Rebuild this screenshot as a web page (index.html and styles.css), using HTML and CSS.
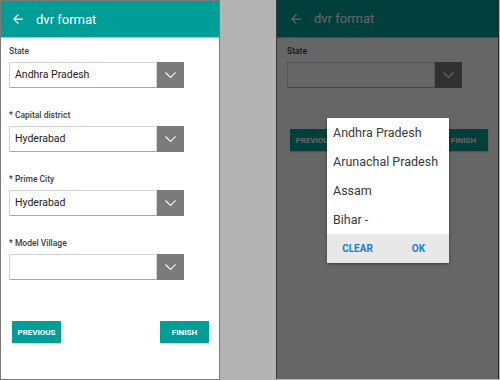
FILE: index.html
```html
<!DOCTYPE html>
<html lang="en">

<head>
    <meta charset="UTF-8">
    <meta name="viewport" content="width=device-width, initial-scale=1.0">
    <title>dvr format</title>
    <link rel="stylesheet" href="styles.css">
</head>

<body>

    <!-- Tela 1: formulario -->
    <div class="phone phone-left">
        <div class="toolbar">
            <svg class="back" width="10" height="10" viewBox="0 0 16 16">
                <path d="M16 7H3.8l5.6-5.6L8 0 0 8l8 8 1.4-1.4L3.8 9H16z" fill="#fff" />
            </svg>
            <span class="title">dvr format</span>
        </div>
        <div class="form">
            <div class="field">
                <label>State</label>
                <div class="select">
                    <span class="value">Andhra Pradesh</span>
                    <span class="arrow"><svg width="11" height="6" viewBox="0 0 11 6"><polyline points="0.5,0.5 5.5,5.5 10.5,0.5" fill="none" stroke="#fff" stroke-width="1.1" /></svg></span>
                </div>
            </div>
            <div class="field">
                <label>* Capital district</label>
                <div class="select">
                    <span class="value">Hyderabad</span>
                    <span class="arrow"><svg width="11" height="6" viewBox="0 0 11 6"><polyline points="0.5,0.5 5.5,5.5 10.5,0.5" fill="none" stroke="#fff" stroke-width="1.1" /></svg></span>
                </div>
            </div>
            <div class="field">
                <label>* Prime City</label>
                <div class="select">
                    <span class="value">Hyderabad</span>
                    <span class="arrow"><svg width="11" height="6" viewBox="0 0 11 6"><polyline points="0.5,0.5 5.5,5.5 10.5,0.5" fill="none" stroke="#fff" stroke-width="1.1" /></svg></span>
                </div>
            </div>
            <div class="field">
                <label>* Model Village</label>
                <div class="select">
                    <span class="value"></span>
                    <span class="arrow"><svg width="11" height="6" viewBox="0 0 11 6"><polyline points="0.5,0.5 5.5,5.5 10.5,0.5" fill="none" stroke="#fff" stroke-width="1.1" /></svg></span>
                </div>
            </div>
            <div class="actions">
                <button class="btn">PREVIOUS</button>
                <button class="btn">FINISH</button>
            </div>
        </div>
    </div>

    <div class="spacer"></div>

    <!-- Tela 2: dialogo de selecao aberto -->
    <div class="phone phone-right">
        <div class="toolbar">
            <svg class="back" width="10" height="10" viewBox="0 0 16 16">
                <path d="M16 7H3.8l5.6-5.6L8 0 0 8l8 8 1.4-1.4L3.8 9H16z" fill="#fff" />
            </svg>
            <span class="title">dvr format</span>
        </div>
        <div class="form">
            <div class="field">
                <label>State</label>
                <div class="select">
                    <span class="value"></span>
                    <span class="arrow"><svg width="11" height="6" viewBox="0 0 11 6"><polyline points="0.5,0.5 5.5,5.5 10.5,0.5" fill="none" stroke="#fff" stroke-width="1.1" /></svg></span>
                </div>
            </div>
            <div class="actions">
                <button class="btn">PREVIOUS</button>
                <button class="btn">FINISH</button>
            </div>
        </div>
        <div class="overlay"></div>
        <div class="dialog">
            <ul class="options">
                <li>Andhra Pradesh</li>
                <li>Arunachal Pradesh</li>
                <li>Assam</li>
                <li>Bihar -</li>
            </ul>
            <div class="dialog-actions">
                <span>CLEAR</span>
                <span>OK</span>
            </div>
        </div>
    </div>

</body>

</html>
```
FILE: styles.css
```css
body {
    margin: 0;
    padding: 0;
    height: 380px;
    display: flex;
    align-items: flex-start;
    background-color: #b3b3b3;
    font-family: Roboto, "Liberation Sans", sans-serif;
    overflow: hidden;
}

.phone {
    position: relative;
    height: 378px;
    background-color: #fff;
    overflow: hidden;
}

.phone-left {
    width: 218px;
    border: 1px solid #7a7a7a;
}

.phone-right {
    width: 221px;
    height: 379px;
    border-left: 1px solid #3a3a3a;
    border-right: 1px solid #2a2a2a;
}

.spacer {
    width: 56px;
}

.toolbar {
    height: 36px;
    display: flex;
    align-items: center;
    padding-left: 12px;
    background-color: #009e97;
    box-shadow: 0 1px 1px rgba(0, 0, 0, 0.25);
}

.phone-right .toolbar {
    height: 37px;
    padding-left: 14px;
}

.back {
    margin-right: 13px;
}

.title {
    color: #fff;
    font-size: 13px;
}

.form {
    padding: 8px 8px 0 8px;
}

.phone-right .form {
    padding-left: 10px;
}

.field {
    margin-bottom: 21px;
}

.field label {
    display: block;
    height: 12px;
    margin-bottom: 5px;
    font-size: 8.5px;
    line-height: 12px;
    font-weight: 500;
    color: #3c3c3c;
}

.select {
    display: flex;
    width: 175px;
    height: 26px;
}

.value {
    flex: 1;
    box-sizing: border-box;
    padding-left: 5px;
    border: 1px solid #d4d4d4;
    border-bottom-color: #a8a8a8;
    font-size: 10.5px;
    line-height: 24px;
    color: #222;
}

.arrow {
    width: 27px;
    display: flex;
    align-items: center;
    justify-content: center;
    background-color: #7b7b7b;
}

.actions {
    display: flex;
    justify-content: space-between;
    padding: 0 2px 0 3px;
    margin-top: 41px;
}

.btn {
    width: 49px;
    height: 22px;
    padding: 0;
    border: none;
    border-radius: 1px;
    background-color: #009e97;
    color: #fff;
    font-family: Roboto, "Liberation Sans", sans-serif;
    font-size: 8px;
    font-weight: bold;
    box-shadow: 0 1px 1px rgba(0, 0, 0, 0.2);
}

.overlay {
    position: absolute;
    top: 0;
    left: 0;
    right: 0;
    bottom: 0;
    background-color: rgba(0, 0, 0, 0.6);
}

.dialog {
    position: absolute;
    top: 118px;
    left: 50px;
    width: 122px;
    background-color: #fff;
    box-shadow: 0 1px 3px rgba(0, 0, 0, 0.4);
}

.options {
    list-style: none;
    margin: 0;
    padding: 0;
}

.options li {
    height: 29px;
    line-height: 30px;
    padding-left: 6px;
    font-size: 12.5px;
    color: #3a3a3a;
    white-space: nowrap;
}

.dialog-actions {
    display: flex;
    height: 29px;
    background-color: #e8e8e8;
}

.dialog-actions span {
    flex: 1;
    text-align: center;
    line-height: 29px;
    font-size: 10px;
    font-weight: bold;
    color: #1a7fd4;
}
```
